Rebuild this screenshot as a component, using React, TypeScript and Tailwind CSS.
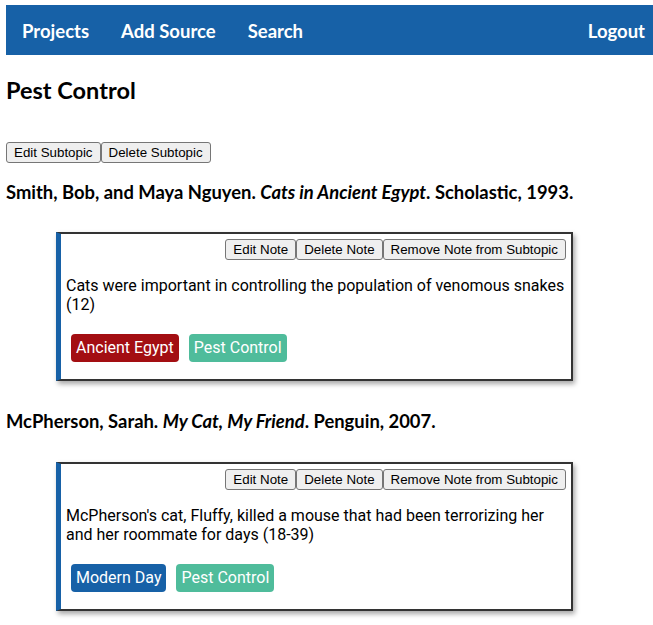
import React from "react"

const heading = "font-['Lato','Open_Sans',sans-serif]"

function Btn({ label }: { label: string }) {
  return (
    <button className="h-[21px] px-[7px] bg-[#efefef] border border-[#767676] rounded-[3px] text-[13.33px] leading-none text-black font-['Liberation_Sans',Arial,sans-serif]">
      {label}
    </button>
  )
}

function Tag({ label, color }: { label: string; color: string }) {
  return (
    <span className={`h-[28px] px-[5px] flex items-center rounded-[4px] text-white text-[16px] font-['Roboto',sans-serif] ${color}`}>
      {label}
    </span>
  )
}

function Note({ text, tags }: { text: React.ReactNode; tags: { label: string; color: string }[] }) {
  return (
    <div className="ml-[50px] w-[517px] border-2 border-[#333] border-l-[5px] border-l-[#1761a7] shadow-[2px_3px_5px_rgba(0,0,0,0.35)] bg-white pt-[5px] pb-[17px] pl-[5px] pr-[5px]">
      <div className="flex justify-end">
        <Btn label="Edit Note" />
        <Btn label="Delete Note" />
        <Btn label="Remove Note from Subtopic" />
      </div>
      <p className="mt-[16px] text-[16px] leading-[19px] text-black font-['Roboto',sans-serif]">{text}</p>
      <div className="mt-[20px] ml-[5px] flex gap-[10px]">
        {tags.map((t) => (
          <Tag key={t.label} label={t.label} color={t.color} />
        ))}
      </div>
    </div>
  )
}

export default function App() {
  return (
    <div className="bg-white min-h-[625px] pt-[5px] pl-[6px] text-black">
      <nav className={`h-[50px] bg-[#1761a7] flex items-center pt-[3px] pl-[16px] pr-[8px] text-white text-[18.5px] font-bold ${heading}`}>
        <a className="mr-[32px]">Projects</a>
        <a className="mr-[32px]">Add Source</a>
        <a>Search</a>
        <a className="ml-auto">Logout</a>
      </nav>

      <h1 className={`mt-[21px] text-[23.5px] leading-[28px] font-bold ${heading}`}>Pest Control</h1>

      <div className="mt-[38px] flex">
        <Btn label="Edit Subtopic" />
        <Btn label="Delete Subtopic" />
      </div>

      <h3 className={`mt-[17px] text-[18.4px] leading-[24px] font-bold ${heading}`}>
        Smith, Bob, and Maya Nguyen. <i>Cats in Ancient Egypt</i>. Scholastic, 1993.
      </h3>

      <div className="mt-[28px]">
        <Note
          text="Cats were important in controlling the population of venomous snakes (12)"
          tags={[
            { label: "Ancient Egypt", color: "bg-[#a30e12]" },
            { label: "Pest Control", color: "bg-[#4fbc9b]" },
          ]}
        />
      </div>

      <h3 className={`mt-[28px] text-[18.4px] leading-[24px] font-bold ${heading}`}>
        McPherson, Sarah. <i>My Cat, My Friend</i>. Penguin, 2007.
      </h3>

      <div className="mt-[29px]">
        <Note
          text="McPherson's cat, Fluffy, killed a mouse that had been terrorizing her and her roommate for days (18-39)"
          tags={[
            { label: "Modern Day", color: "bg-[#1761a7]" },
            { label: "Pest Control", color: "bg-[#4fbc9b]" },
          ]}
        />
      </div>
    </div>
  )
}
